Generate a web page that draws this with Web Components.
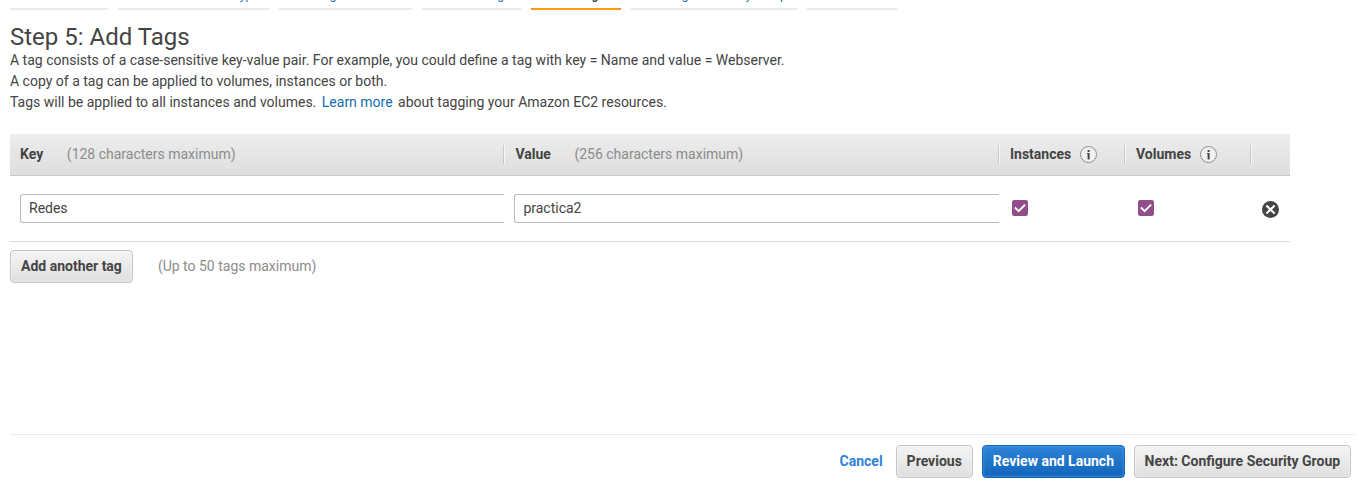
<!DOCTYPE html>
<html lang="en">
<head>
<meta charset="utf-8">
<title>Step 5: Add Tags</title>
<style>
html, body { margin: 0; height: 100%; background: #fff; overflow: hidden; }
body { font: 14px/21px Roboto, "Liberation Sans", sans-serif; color: #444; }
</style>
</head>
<body>
<launch-wizard></launch-wizard>
<script>
const define = (name, html) => {
  const tpl = document.createElement('template');
  tpl.innerHTML = html;
  customElements.define(name, class extends HTMLElement {
    constructor() {
      super();
      this.attachShadow({ mode: 'open' }).append(tpl.content.cloneNode(true));
    }
  });
};

define('wizard-step', `
<style>
:host { display: block; box-sizing: border-box; height: 25px; flex: none; padding-left: 10px; border-bottom: 2px solid #eaeaea; color: #146eb4; font-size: 12px; line-height: 21px; white-space: nowrap; }
:host([active]) { border-color: #ff9915; color: #444; font-weight: bold; }
</style><slot></slot>`);

define('wizard-steps', `
<style>
:host { display: flex; align-items: flex-end; gap: 10px; height: 10px; padding-left: 10px; overflow: hidden; }
</style><slot></slot>`);

define('info-icon', `
<style>:host { display: block; width: 17px; height: 17px; } svg { display: block; }</style>
<svg width="17" height="17" viewBox="0 0 17 17"><circle cx="8.5" cy="8.5" r="8" fill="#f0f0f0" stroke="#8c8c8c"/><path d="M7.6 4h2v2h-2zM7 7h2.6v6.5h-2V8H7z" fill="#444"/></svg>`);

define('check-box', `
<style>:host { display: block; width: 16px; height: 16px; } svg { display: block; }</style>
<svg width="16" height="16" viewBox="0 0 16 16"><rect width="16" height="16" rx="2.3" fill="#924d8b"/><path d="M2.9 7.5l3.7 3.6L13.1 4.6" fill="none" stroke="#fff" stroke-width="1.9"/></svg>`);

define('remove-icon', `
<style>:host { display: block; width: 17px; height: 17px; } svg { display: block; }</style>
<svg width="17" height="17" viewBox="0 0 17 17"><circle cx="8.5" cy="8.5" r="8.5" fill="#444"/><path d="M4.4 4.4l8.2 8.2M12.6 4.4l-8.2 8.2" stroke="#fff" stroke-width="2.1"/></svg>`);

define('column-head', `
<style>
:host { display: flex; align-items: center; box-sizing: border-box; height: 41px; padding-left: 11px; position: relative; font-weight: bold; white-space: nowrap; }
:host([first]) { padding-left: 10px; }
:host(:not([first]))::before { content: ""; position: absolute; left: -1px; top: 11px; width: 1px; height: 19px; background: #c8c8c8; border-right: 1px solid #f8f8f8; }
::slotted(small) { font-size: 14px; font-weight: normal; color: #8c8c8c; margin-left: 23.6px; }
::slotted(info-icon) { margin: 0 0 0 9px; }
</style><slot></slot>`);

define('text-field', `
<style>
:host { display: block; box-sizing: border-box; height: 29px; border: 1px solid #bbb; border-right: 0; border-radius: 3px 0 0 3px; padding: 3px 8px; background: #fff; }
</style><slot></slot>`);

define('aws-button', `
<style>
:host { display: block; box-sizing: border-box; height: 33px; flex: none; padding: 5px 10px; border: 1px solid #c4c4c4; border-radius: 4px; background: linear-gradient(#f4f4f4, #dfdfdf); box-shadow: inset 0 0 1px 1px rgba(255,255,255,.4); font-weight: bold; white-space: nowrap; text-align: center; }
:host([primary]) { color: #fff; border-color: #1166bb; background: linear-gradient(#2e83d9, #1166bb); box-shadow: inset 0 0 2px 1px rgba(100,170,240,.45); }
:host([link]) { color: #2e83d9; border-color: transparent; background: none; box-shadow: none; padding: 5px 12px; }
</style><slot></slot>`);

define('tag-table', `
<style>
:host { display: block; width: 1280px; }
.row { display: grid; grid-template-columns: 494.4px 494.6px 126px 126px 39px; }
.head { height: 41px; background: linear-gradient(#ededed, #dedede); border-bottom: 1px solid #c8c8c8; }
.body { height: 65px; border-bottom: 1px solid #ddd; align-items: center; }
.body text-field { margin-left: 10px; }
check-box { margin: -1px 0 0 13px; }
remove-icon { margin: 1px 0 0 11px; }
</style>
<div class="row head">
<column-head first>Key<small>(128 characters maximum)</small></column-head>
<column-head>Value<small>(256 characters maximum)</small></column-head>
<column-head>Instances<info-icon></info-icon></column-head>
<column-head>Volumes<info-icon></info-icon></column-head>
<column-head></column-head>
</div>
<div class="row body">
<text-field>Redes</text-field><text-field>practica2</text-field>
<check-box></check-box><check-box></check-box><remove-icon></remove-icon>
</div>`);

define('launch-wizard', `
<style>
:host { display: flex; flex-direction: column; height: 487px; }
main { flex: 1; padding: 13px 10px 0; }
h1 { margin: 0 0 -2px; font-size: 24px; line-height: 29px; font-weight: normal; }
p { margin: 0; white-space: nowrap; }
a { color: #146eb4; margin: 0 2px; }
tag-table { margin-top: 21px; }
.add { display: flex; align-items: center; gap: 25px; margin-top: 8px; color: #8c8c8c; }
.add aws-button { color: #444; }
footer { display: flex; justify-content: flex-end; height: 42px; padding: 10px 4px 0 0; margin: 0 11px 0 10px; border-top: 1px solid #eaeaea; }
footer aws-button + aws-button { margin-left: 9px; }
footer aws-button[link] + aws-button { margin-left: 0; }
footer aws-button:last-child { width: 217px; padding: 5px 0 5px 9.6px; text-align: left; }
</style>
<wizard-steps>
<wizard-step style="width:98px">1. Choose AMI</wizard-step>
<wizard-step style="width:151px">2. Choose Instance Type</wizard-step>
<wizard-step style="width:133px">3. Configure Instance</wizard-step>
<wizard-step style="width:99px">4. Add Storage</wizard-step>
<wizard-step style="width:90px" active>5. Add Tags</wizard-step>
<wizard-step style="width:166px">6. Configure Security Group</wizard-step>
<wizard-step style="width:90px">7. Review</wizard-step>
</wizard-steps>
<main>
<h1>Step 5: Add Tags</h1>
<p>A tag consists of a case-sensitive key-value pair. For example, you could define a tag with key = Name and value = Webserver.</p>
<p>A copy of a tag can be applied to volumes, instances or both.</p>
<p>Tags will be applied to all instances and volumes. <a>Learn more</a> about tagging your Amazon EC2 resources.</p>
<tag-table></tag-table>
<div class="add"><aws-button>Add another tag</aws-button><span>(Up to 50 tags maximum)</span></div>
</main>
<footer>
<aws-button link>Cancel</aws-button>
<aws-button>Previous</aws-button>
<aws-button primary>Review and Launch</aws-button>
<aws-button>Next: Configure Security Group</aws-button>
</footer>`);
</script>
</body>
</html>
